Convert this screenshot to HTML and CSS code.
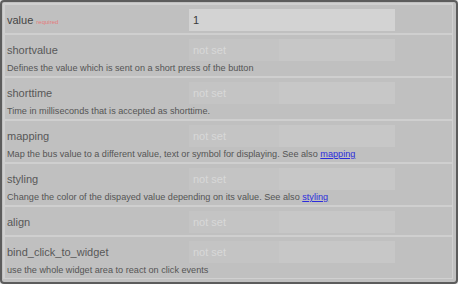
FILE: index.html
```html
<!DOCTYPE html>
<html lang="en">
<head>
    <meta charset="UTF-8">
    <meta name="viewport" content="width=device-width, initial-scale=1.0">
    <title>Widget properties</title>
    <link rel="stylesheet" href="styles.css">
</head>
<body>
    <div class="dialog">
        <div class="props">
            <div class="prop">
                <label class="prop-name required-name">value <span class="required">required</span></label>
                <input class="prop-input filled" type="text" value="1">
            </div>

            <div class="prop">
                <label class="prop-name">shortvalue</label>
                <input class="prop-input" type="text" placeholder="not set">
                <div class="prop-desc">Defines the value which is sent on a short press of the button</div>
            </div>

            <div class="prop">
                <label class="prop-name">shorttime</label>
                <input class="prop-input" type="text" placeholder="not set">
                <div class="prop-desc">Time in milliseconds that is accepted as shorttime.</div>
            </div>

            <div class="prop">
                <label class="prop-name">mapping</label>
                <input class="prop-input" type="text" placeholder="not set">
                <div class="prop-desc">Map the bus value to a different value, text or symbol for displaying. See also <a href="#">mapping</a></div>
            </div>

            <div class="prop">
                <label class="prop-name">styling</label>
                <input class="prop-input" type="text" placeholder="not set">
                <div class="prop-desc">Change the color of the dispayed value depending on its value. See also <a href="#">styling</a></div>
            </div>

            <div class="prop">
                <label class="prop-name">align</label>
                <input class="prop-input" type="text" placeholder="not set">
            </div>

            <div class="prop">
                <label class="prop-name">bind_click_to_widget</label>
                <input class="prop-input" type="text" placeholder="not set">
                <div class="prop-desc">use the whole widget area to react on click events</div>
            </div>
        </div>
    </div>
</body>
</html>
```

FILE: styles.css
```css
body {
    font-family: "Liberation Sans", Arial, sans-serif;
    margin: 0;
    padding: 0;
    background-color: #e6e6e6;
}

.dialog {
    width: 458px;
    height: 284px;
    box-sizing: border-box;
    border: 2px solid #5c5c5c;
    border-radius: 4px;
    background-color: #c0c0c0;
    padding: 1px 3px 3px 1px;
}

.props {
    display: flex;
    flex-direction: column;
    gap: 2px;
    height: 100%;
    box-sizing: border-box;
    border: 1px solid #d0d0d0;
    background-color: #cfcfcf;
    padding: 1px 0 0 1px;
}

.prop {
    display: grid;
    grid-template-columns: 182px 206px;
    align-items: center;
    padding: 4px 2px 2px 2px;
    background-color: #c0c0c0;
}

.prop:has(.prop-desc) {
    padding-bottom: 1px;
}

.prop-name {
    font-size: 11px;
    color: #585858;
}

.required-name {
    color: #444;
}

.required {
    font-size: 6px;
    color: #e47b7b;
}

.prop-input {
    height: 22px;
    box-sizing: border-box;
    border: none;
    outline: none;
    padding: 0 4px;
    font-family: "Liberation Sans", Arial, sans-serif;
    font-size: 11px;
    color: #3a3a3a;
    background: linear-gradient(to right, #c4c4c4 90px, #c7c7c7 90px);
}

.prop-input::placeholder {
    color: #d8d8d8;
}

.prop-input.filled {
    background: #d3d3d3;
}

.prop-desc {
    grid-column: 1 / -1;
    margin-top: 1px;
    font-size: 9.15px;
    line-height: 13px;
    color: #555;
}

.prop-desc a {
    color: #2c2cdc;
}
```
